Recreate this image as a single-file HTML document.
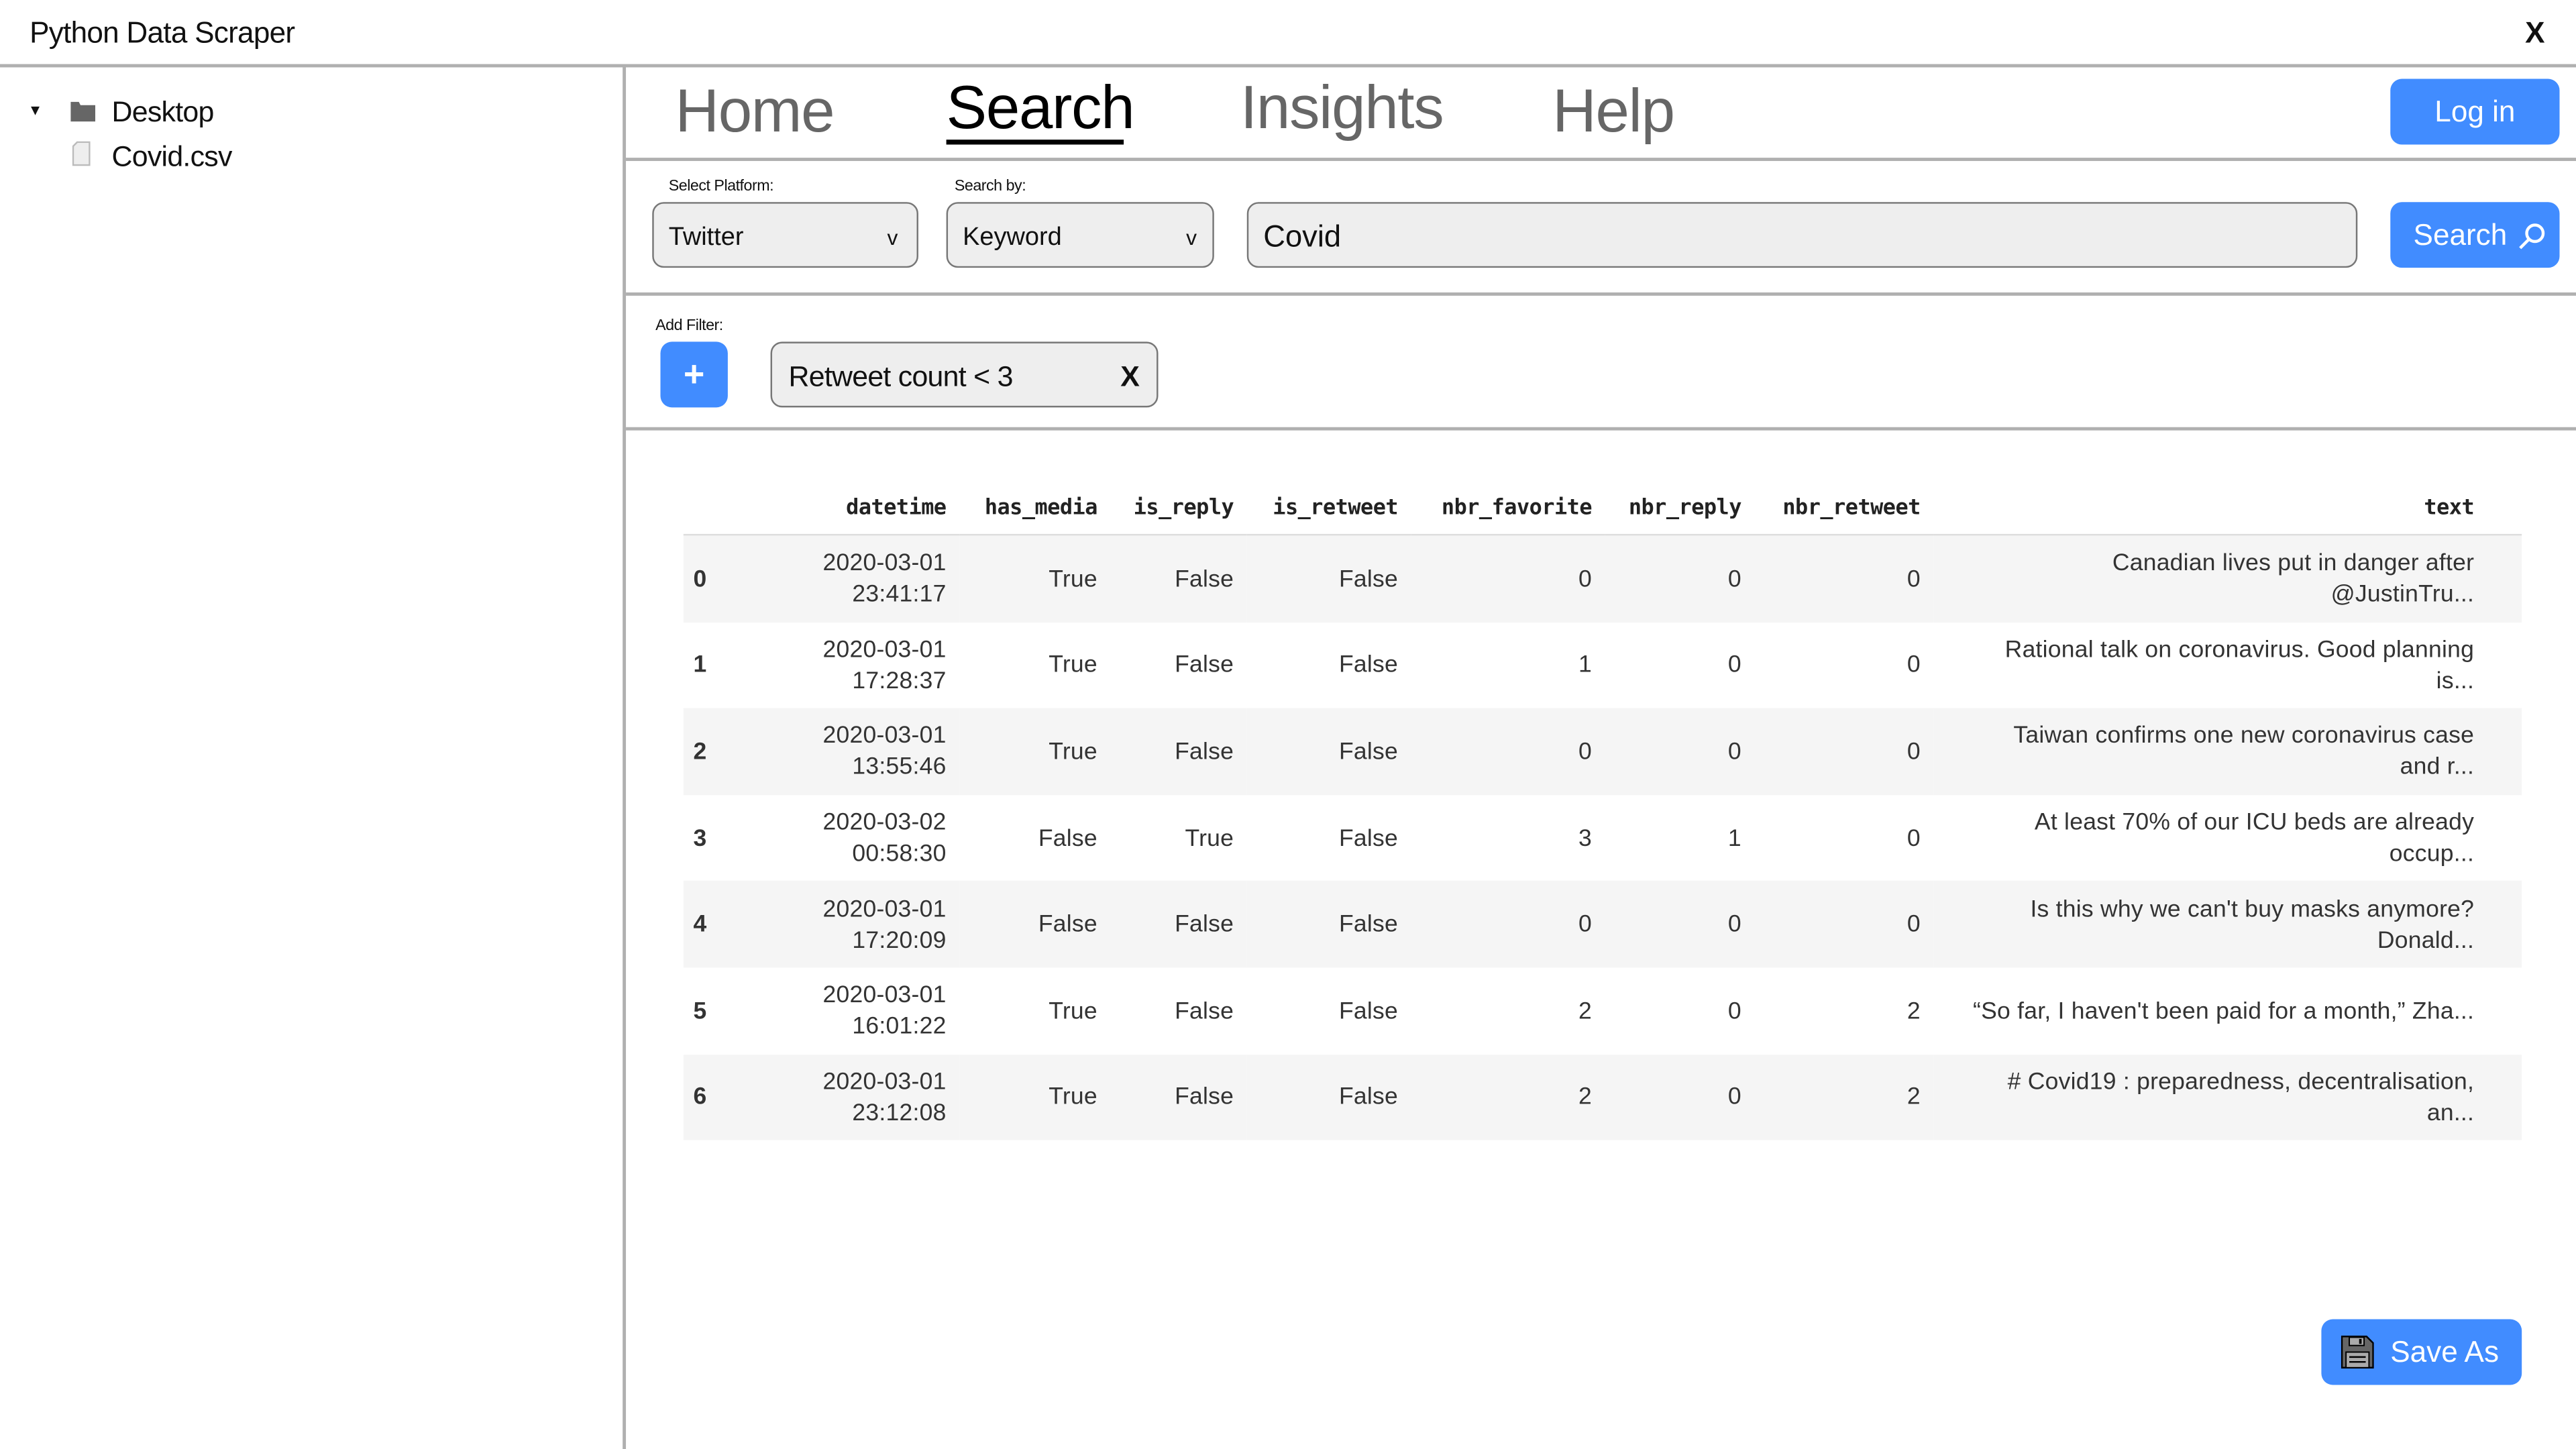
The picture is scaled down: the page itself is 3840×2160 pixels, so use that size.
<!DOCTYPE html>
<html><head><meta charset="utf-8"><style>
html,body{margin:0;padding:0;background:#fff;overflow:hidden;width:3840px;height:2160px}
#w{position:absolute;left:0;top:0;width:1568px;height:882px;transform:scale(2.44898);transform-origin:0 0;font-family:"Liberation Sans",sans-serif;color:#111}
.a{position:absolute;white-space:nowrap}
.hl{position:absolute;height:2px;background:#b0b0b0}
.nav{position:absolute;top:47px;font-size:37px;color:#666;letter-spacing:-0.5px}
.btn{position:absolute;background:#418cff;border-radius:7px;color:#fff;font-size:18px;display:flex;align-items:center;justify-content:center}
.lbl{position:absolute;font-size:9.5px;color:#111;letter-spacing:-0.2px}
.box{position:absolute;background:#eee;border:1px solid #777;border-radius:7px;box-sizing:border-box;font-size:15.5px;display:flex;align-items:center;padding-top:3px}
table{position:absolute;left:416px;top:291px;border-collapse:collapse;table-layout:fixed;width:1119px;font-size:14.5px;color:#333;letter-spacing:0.1px}
th{font-family:"DejaVu Sans Mono","Liberation Mono",monospace;font-size:13px;font-weight:bold;color:#222;text-align:right;padding:2px 8px 0 0;height:32px;border-bottom:1px solid #ddd;letter-spacing:-0.2px}
td{text-align:right;padding:2px 8px 0 0;height:50.6px;line-height:19px;white-space:nowrap}
td.i{text-align:left;padding:2px 0 0 6px;font-weight:bold}
tr.s td{background:#f5f5f5}
td.t{padding-right:29px}
</style></head><body><div id="w">
<div class="a" style="left:18px;top:10px;font-size:18px;letter-spacing:-0.3px">Python Data Scraper</div>
<div class="a" style="left:1537px;top:10px;font-size:18px;font-weight:bold">X</div>
<div class="hl" style="left:0;top:39px;width:1568px"></div>
<div style="position:absolute;left:379px;top:40px;width:2px;height:842px;background:#b0b0b0"></div>
<div class="a" style="left:17px;top:62px;font-size:9px">▼</div>
<svg class="a" style="left:43px;top:61px" width="15" height="13"><path d="M0 1h5l1 2h9v10H0z" fill="#666"/></svg>
<div class="a" style="left:68px;top:58px;font-size:17.5px;letter-spacing:-0.3px">Desktop</div>
<svg class="a" style="left:44px;top:86px" width="11" height="15"><path d="M3 .5h7.5v14H.5V3z" fill="#eee" stroke="#bbb"/></svg>
<div class="a" style="left:68px;top:85px;font-size:17.5px;letter-spacing:-0.3px">Covid.csv</div>

<div class="nav" style="left:411px">Home</div>
<div class="nav" style="left:576px;color:#000;top:45px">Search</div>
<div style="position:absolute;left:576px;top:85px;width:108px;height:3px;background:#000"></div>
<div class="nav" style="left:755px;top:45px">Insights</div>
<div class="nav" style="left:945px">Help</div>
<div class="btn" style="left:1455px;top:48px;width:103px;height:40px">Log in</div>
<div class="hl" style="left:381px;top:96px;width:1187px"></div>

<div class="lbl" style="left:407px;top:108px">Select Platform:</div>
<div class="lbl" style="left:581px;top:108px">Search by:</div>
<div class="box" style="left:397px;top:123px;width:162px;height:40px;padding-left:9px">Twitter<span style="position:absolute;left:142px;font-size:13px">v</span></div>
<div class="box" style="left:576px;top:123px;width:163px;height:40px;padding-left:9px">Keyword<span style="position:absolute;left:145px;font-size:13px">v</span></div>
<div class="box" style="left:759px;top:123px;width:676px;height:40px;padding-left:9px;font-size:18.5px;padding-top:1px">Covid</div>
<div class="btn" style="left:1455px;top:123px;width:103px;height:40px;justify-content:flex-start;padding-left:14px;box-sizing:border-box;padding-top:1px">Search<svg style="margin-left:6px" width="18" height="18" viewBox="0 0 18 18"><circle cx="11" cy="7" r="5" fill="none" stroke="#fff" stroke-width="1.8"/><path d="M7.5 10.5L2 16" stroke="#fff" stroke-width="1.8"/></svg></div>
<div class="hl" style="left:381px;top:178px;width:1187px"></div>

<div class="lbl" style="left:399px;top:193px">Add Filter:</div>
<div class="btn" style="left:402px;top:208px;width:41px;height:40px;font-size:22px;font-weight:bold">+</div>
<div class="box" style="left:469px;top:208px;width:236px;height:40px;padding-left:10px;font-size:17.5px;letter-spacing:-0.3px;padding-top:2px">Retweet count &lt; 3<span style="position:absolute;left:212px;font-weight:bold">X</span></div>
<div class="hl" style="left:381px;top:260px;width:1187px"></div>

<table>
<colgroup><col style="width:74px"><col style="width:94px"><col style="width:92px"><col style="width:83px"><col style="width:100px"><col style="width:118px"><col style="width:91px"><col style="width:109px"><col style="width:358px"></colgroup>
<tr><th></th><th>datetime</th><th>has_media</th><th>is_reply</th><th>is_retweet</th><th>nbr_favorite</th><th>nbr_reply</th><th>nbr_retweet</th><th style="padding-right:29px">text</th></tr>
<tr class="s"><td class="i">0</td><td>2020-03-01<br>23:41:17</td><td>True</td><td>False</td><td>False</td><td>0</td><td>0</td><td>0</td><td class="t">Canadian lives put in danger after<br>@JustinTru...</td></tr>
<tr><td class="i">1</td><td>2020-03-01<br>17:28:37</td><td>True</td><td>False</td><td>False</td><td>1</td><td>0</td><td>0</td><td class="t">Rational talk on coronavirus. Good planning<br>is...</td></tr>
<tr class="s"><td class="i">2</td><td>2020-03-01<br>13:55:46</td><td>True</td><td>False</td><td>False</td><td>0</td><td>0</td><td>0</td><td class="t">Taiwan confirms one new coronavirus case<br>and r...</td></tr>
<tr><td class="i">3</td><td>2020-03-02<br>00:58:30</td><td>False</td><td>True</td><td>False</td><td>3</td><td>1</td><td>0</td><td class="t">At least 70% of our ICU beds are already<br>occup...</td></tr>
<tr class="s"><td class="i">4</td><td>2020-03-01<br>17:20:09</td><td>False</td><td>False</td><td>False</td><td>0</td><td>0</td><td>0</td><td class="t">Is this why we can't buy masks anymore?<br>Donald...</td></tr>
<tr><td class="i">5</td><td>2020-03-01<br>16:01:22</td><td>True</td><td>False</td><td>False</td><td>2</td><td>0</td><td>2</td><td class="t">“So far, I haven't been paid for a month,” Zha...</td></tr>
<tr class="s"><td class="i">6</td><td>2020-03-01<br>23:12:08</td><td>True</td><td>False</td><td>False</td><td>2</td><td>0</td><td>2</td><td class="t"># Covid19 : preparedness, decentralisation,<br>an...</td></tr>
</table>

<div class="btn" style="left:1413px;top:803px;width:122px;height:40px;justify-content:flex-start;padding-left:12px;box-sizing:border-box">
<svg width="20" height="20" viewBox="0 0 20 20"><path d="M.5 .5h15l4 4v15H.5z" fill="#666" stroke="#000"/><rect x="5" y="1" width="9" height="5" fill="#aaa" stroke="#000" stroke-width=".8"/><rect x="11" y="2" width="1.5" height="3" fill="#000"/><rect x="3" y="10" width="14" height="9.5" fill="#aaa" stroke="#000" stroke-width=".8"/><path d="M5 13h10M5 16h10" stroke="#000"/></svg>
<span style="margin-left:10px">Save As</span></div>
</div></body></html>
